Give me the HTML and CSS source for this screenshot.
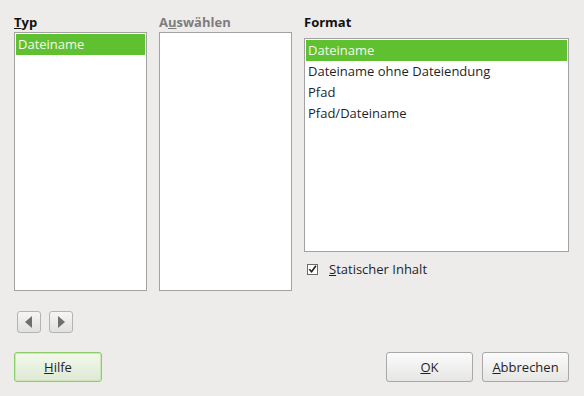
FILE: index.html
```html
<!DOCTYPE html>
<html lang="de">

<head>
    <meta charset="UTF-8">
    <meta name="viewport" content="width=device-width, initial-scale=1.0">
    <title>Feldbefehl</title>
    <link rel="stylesheet" href="styles.css">
</head>

<body>

    <article class="dialog">
        <section class="panes">
            <div class="pane pane-typ">
                <h2 class="label"><u>T</u>yp</h2>
                <ul class="list list-typ">
                    <li class="selected">Dateiname</li>
                </ul>
            </div>
            <div class="pane pane-aus">
                <h2 class="label disabled">A<u>u</u>swählen</h2>
                <ul class="list list-aus"></ul>
            </div>
            <div class="pane pane-format">
                <h2 class="label">Format</h2>
                <ul class="list list-format">
                    <li class="selected">Dateiname</li>
                    <li>Dateiname ohne Dateiendung</li>
                    <li>Pfad</li>
                    <li>Pfad/Dateiname</li>
                </ul>
                <label class="check">
                    <span class="box">
                        <svg width="10" height="10" viewBox="0 0 10 10">
                            <path d="M1.5 5.2 L4 8 L8.8 1.5" fill="none" stroke="#1e1e1e" stroke-width="1.8"/>
                        </svg>
                    </span>
                    <span><u>S</u>tatischer Inhalt</span>
                </label>
            </div>
        </section>

        <nav class="arrows">
            <button class="arrow">
                <svg width="8" height="12" viewBox="0 0 8 12"><path d="M7 0 L7 12 L0 6 Z" fill="#6f6f6f"/></svg>
            </button>
            <button class="arrow">
                <svg width="8" height="12" viewBox="0 0 8 12"><path d="M1 0 L1 12 L8 6 Z" fill="#6f6f6f"/></svg>
            </button>
        </nav>

        <footer class="buttons">
            <button class="btn help"><u>H</u>ilfe</button>
            <span class="spacer"></span>
            <button class="btn"><u>O</u>K</button>
            <button class="btn"><u>A</u>bbrechen</button>
        </footer>
    </article>

</body>

</html>
```

FILE: styles.css
```css
* {
    box-sizing: border-box;
    margin: 0;
    padding: 0;
}

body {
    background-color: #edeceb;
    font-family: "Open Sans", "Noto Sans", sans-serif;
    font-size: 13px;
    color: #1f1f2a;
    width: 584px;
    height: 396px;
    overflow: hidden;
}

.dialog {
    padding: 13px 15px 0 14px;
}

.panes {
    display: flex;
    gap: 12px;
}

.pane-typ,
.pane-aus {
    width: 133px;
}

.pane-format {
    flex: 1;
}

.label {
    font-size: 13px;
    font-weight: bold;
    line-height: 19px;
    color: #111;
}

.label.disabled {
    color: #7d7d7d;
}

.list {
    list-style: none;
    background: #fff;
    border: 1px solid #a2a2a2;
    padding: 1px;
}

.list li {
    height: 21px;
    line-height: 21px;
    padding-left: 2px;
    white-space: nowrap;
}

.list li.selected {
    background: #5fc12f;
    color: #f4f6f0;
}

.list-typ,
.list-aus {
    height: 259px;
}

.list-format {
    margin-top: 6px;
    height: 214px;
}

.check {
    display: flex;
    align-items: center;
    gap: 11px;
    margin-top: 8px;
    padding-left: 3px;
    line-height: 18px;
}

.check .box {
    width: 11px;
    height: 11px;
    border: 1px solid #6a6a6a;
    background: #fff;
    display: flex;
    align-items: center;
    justify-content: center;
}

.arrows {
    display: flex;
    gap: 8px;
    margin-top: 20px;
    padding-left: 3px;
}

.arrow {
    width: 24px;
    height: 22px;
    border: 1px solid #b4b4b4;
    border-radius: 3px;
    background: linear-gradient(#f5f5f4, #e1e1e0);
    display: flex;
    align-items: center;
    justify-content: center;
}

.buttons {
    display: flex;
    gap: 9px;
    margin-top: 19px;
}

.spacer {
    flex: 1;
}

.btn {
    width: 87px;
    height: 30px;
    border: 1px solid #a8a8a8;
    border-radius: 3px;
    background: linear-gradient(#fbfbfb, #e6e6e5);
    font-family: inherit;
    font-size: 13px;
    color: #1f1f2a;
}

.btn.help {
    width: 88px;
    border-color: #8ccd69;
    box-shadow: inset 0 0 0 1px #c9e8b6;
    background: linear-gradient(#f3faec, #dde8d4);
}
```
